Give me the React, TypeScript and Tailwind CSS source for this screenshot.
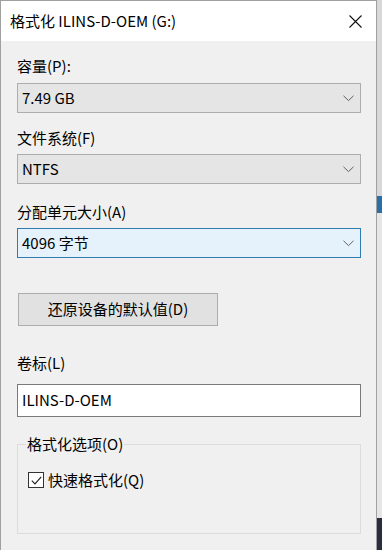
import React from 'react';

const FONT = { fontFamily: '"Microsoft YaHei UI", "Noto Sans CJK SC", "Noto Sans", sans-serif' };

function Chevron() {
  return (
    <svg width="11" height="7" viewBox="0 0 11 7" className="shrink-0">
      <path d="M0.5 0.8 L5.5 5.6 L10.5 0.8" fill="none" stroke="#606060" strokeWidth="1" />
    </svg>
  );
}

function Combo({ value, focused }: { value: string; focused?: boolean }) {
  return (
    <div
      className={
        'flex h-[30px] w-[344px] items-center justify-between border pl-[4px] pr-[6px] text-[15px] ' +
        (focused ? 'border-[#2f7cb3] bg-[#e5f1fb]' : 'border-[#adadad] bg-[#e5e5e5]')
      }
    >
      <span>{value}</span>
      <Chevron />
    </div>
  );
}

export default function App() {
  return (
    <div className="flex h-[550px] w-[382px] overflow-hidden bg-[#2a2d3c] text-black" style={FONT}>
      <div className="flex h-[550px] w-[377px] shrink-0 flex-col border-l border-t border-r border-[#a0a0a0] bg-[#f0f0f0]">
        <div className="flex h-[40px] shrink-0 items-center justify-between bg-white pl-[9px] pr-[14px]">
          <span className="text-[15px]">格式化 ILINS-D-OEM (G:)</span>
          <svg width="13" height="13" viewBox="0 0 13 13">
            <path d="M0.5 0.5 L12.5 12.5 M12.5 0.5 L0.5 12.5" stroke="#111" strokeWidth="1.1" />
          </svg>
        </div>

        <div className="flex flex-col pl-[16px] text-[15px]">
          <div className="mt-[14px] h-[22px] leading-[22px]">容量(P):</div>
          <div className="mt-[6px]">
            <Combo value="7.49 GB" />
          </div>

          <div className="mt-[14px] h-[22px] leading-[22px]">文件系统(F)</div>
          <div className="mt-[5px]">
            <Combo value="NTFS" />
          </div>

          <div className="mt-[17px] h-[22px] leading-[22px]">分配单元大小(A)</div>
          <div className="mt-[5px]">
            <Combo value="4096 字节" focused />
          </div>

          <button className="ml-[1px] mt-[35px] flex h-[33px] w-[200px] items-center justify-center border border-[#adadad] bg-[#e1e1e1] text-[15px]">
            还原设备的默认值(D)
          </button>

          <div className="mt-[26px] h-[22px] leading-[22px]">卷标(L)</div>
          <div className="mt-[10px] flex h-[33px] w-[344px] items-center border border-[#7a7a7a] bg-white pl-[4px]">
            ILINS-D-OEM
          </div>

          <div className="relative mt-[27px] h-[90px] w-[344px] border border-[#dcdcdc]">
            <span className="absolute left-[8px] top-[-12px] bg-[#f0f0f0] px-[1px] leading-[22px]">格式化选项(O)</span>
            <div className="mt-[24px] flex items-center pl-[10px]">
              <span className="flex h-[16px] w-[16px] items-center justify-center border border-[#333] bg-white">
                <svg width="11" height="9" viewBox="0 0 11 9">
                  <path d="M0.8 4.6 L4 7.8 L10.2 0.8" fill="none" stroke="#222" strokeWidth="1.2" />
                </svg>
              </span>
              <span className="ml-[4px]">快速格式化(Q)</span>
            </div>
          </div>
        </div>
      </div>
      <div className="flex flex-1 flex-col">
        <div className="h-[196px] bg-[#d8d8d8]" />
        <div className="h-[17px] bg-[#2a6fa8]" />
        <div className="h-[305px] bg-[#e6e6e6]" />
        <div className="flex-1 bg-[#2a2d3c]" />
      </div>
    </div>
  );
}
